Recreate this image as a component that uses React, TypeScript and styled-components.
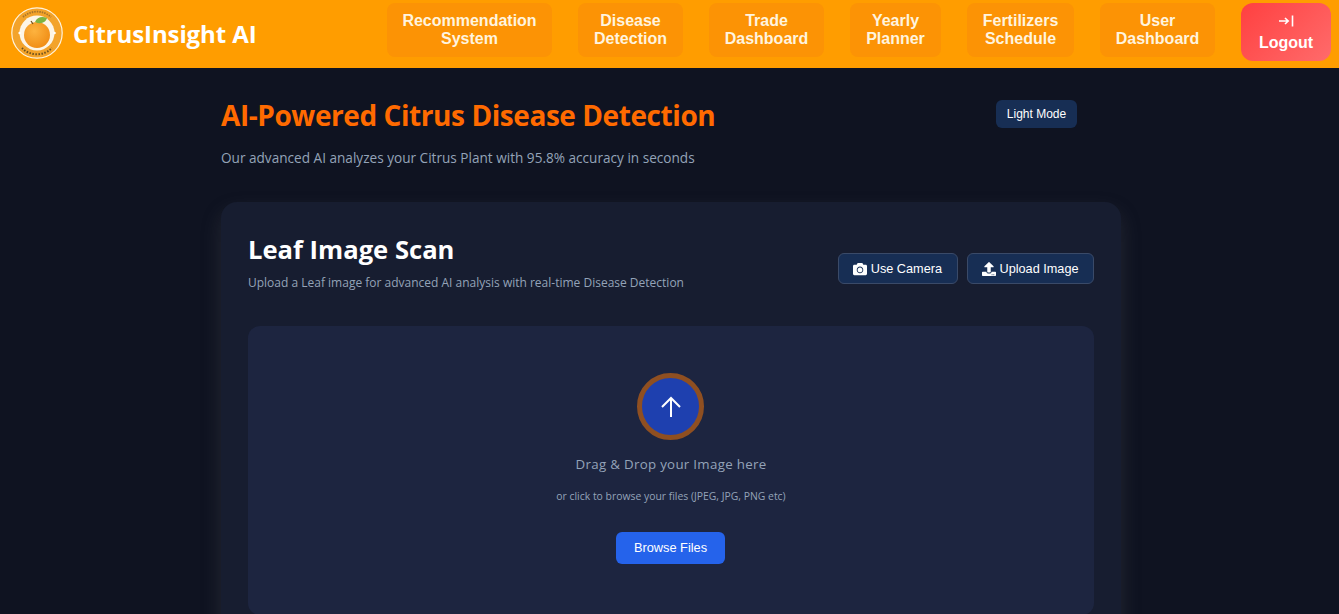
import React from 'react';
import styled, { createGlobalStyle } from 'styled-components';
import { FaCamera, FaUpload } from 'react-icons/fa';

const GlobalStyle = createGlobalStyle`
  html, body {
    margin: 0;
    padding: 0;
    height: 100%;
    overflow: hidden;
    background: #0f1321;
  }
  * {
    box-sizing: border-box;
  }
  button {
    font-family: 'Liberation Sans', Arial, sans-serif;
    cursor: pointer;
  }
`;

const Header = styled.header`
  height: 68px;
  background: #ff9d00;
  display: flex;
  align-items: flex-start;
  padding: 3px 8px 0 11px;
`;

const Brand = styled.div`
  display: flex;
  align-items: center;
  gap: 10px;
  width: 376px;
  height: 60px;
  flex: none;
`;

const BrandName = styled.span`
  font-family: 'Open Sans', 'Noto Sans', sans-serif;
  font-size: 24px;
  font-weight: 700;
  letter-spacing: -0.1px;
  line-height: 62px;
  height: 62px;
  margin-top: 1px;
  color: #fff;
  white-space: nowrap;
`;

const Nav = styled.nav`
  display: flex;
  align-items: flex-start;
  gap: 26px;
  flex: 1;
`;

const NavLink = styled.a<{ $width: number }>`
  width: ${props => props.$width}px;
  height: 54px;
  display: flex;
  align-items: center;
  justify-content: center;
  text-align: center;
  font-family: 'Liberation Sans', Arial, sans-serif;
  font-size: 16px;
  font-weight: 700;
  line-height: 18px;
  color: #fff4df;
  background: #fc9305;
  border-radius: 8px;
`;

const LogoutButton = styled.button`
  width: 90px;
  height: 58px;
  border: 0;
  border-radius: 12px;
  background: linear-gradient(135deg, #ff4040, #ff6b6b);
  color: #fff;
  font-size: 16px;
  font-weight: 700;
  display: flex;
  flex-direction: column;
  align-items: center;
  justify-content: center;
  gap: 7px;
  padding: 3px 0 0;
  line-height: 18px;
`;

const Main = styled.main`
  width: 900px;
  margin-left: 221px;
  font-family: 'Open Sans', 'Noto Sans', sans-serif;
`;

const TitleRow = styled.div`
  display: flex;
  justify-content: space-between;
  align-items: flex-start;
  padding: 29px 44px 0 0;
`;

const PageTitle = styled.h1`
  margin: 0;
  font-size: 28px;
  line-height: 38px;
  font-weight: 700;
  letter-spacing: -0.43px;
  color: #ff6a00;
  position: relative;
  top: -1px;
`;

const ThemeToggle = styled.button`
  height: 28px;
  width: 81px;
  margin-top: 3px;
  border: 0;
  border-radius: 6px;
  background: #172e54;
  color: #fff;
  font-size: 12px;
  padding: 0;
`;

const PageSubtitle = styled.p`
  margin: 14px 0 0;
  font-size: 13.6px;
  line-height: 18px;
  color: #94a3b8;
`;

const Card = styled.section`
  margin-top: 35px;
  padding: 27px;
  height: 460px;
  border-radius: 16px;
  background: #171d30;
  box-shadow: 0 10px 20px rgba(100, 100, 100, 0.25);
`;

const CardHeader = styled.div`
  display: flex;
  justify-content: space-between;
  align-items: flex-start;
`;

const CardTitle = styled.h2`
  margin: 0;
  font-size: 25.6px;
  line-height: 42px;
  font-weight: 700;
  color: #fff;
`;

const CardSubtitle = styled.p`
  margin: 3px 0 0;
  font-size: 12px;
  line-height: 17px;
  color: #94a3b8;
`;

const Actions = styled.div`
  display: flex;
  gap: 9px;
  margin-top: 24px;
`;

const ActionButton = styled.button`
  height: 31px;
  padding: 0 14.5px 0 14px;
  display: flex;
  align-items: center;
  gap: 4px;
  border: 1px solid #3a4a68;
  border-radius: 6px;
  background: #172e54;
  color: #fff;
  font-size: 12.7px;
`;

const DropZone = styled.div`
  margin-top: 35px;
  height: 289px;
  border-radius: 12px;
  background: #1d2540;
  display: flex;
  flex-direction: column;
  align-items: center;
  padding-top: 47px;
`;

const UploadCircle = styled.div`
  width: 67px;
  height: 67px;
  margin-right: 1px;
  border-radius: 50%;
  border: 5px solid #8f4f21;
  background: #1e40af;
  display: flex;
  align-items: center;
  justify-content: center;
`;

const DropTitle = styled.p`
  margin: 14px 0 0;
  font-size: 13.3px;
  line-height: 20px;
  letter-spacing: 0.3px;
  color: #94a3b8;
`;

const DropHint = styled.p`
  margin: 15px 0 0;
  font-size: 10.4px;
  line-height: 14px;
  color: #94a3b8;
`;

const BrowseButton = styled.button`
  margin-top: 29px;
  margin-right: 1px;
  width: 109px;
  height: 32px;
  border: 0;
  border-radius: 6px;
  background: #2563eb;
  color: #fff;
  font-size: 12.8px;
  padding: 0 0 2px;
`;

const Logo = () => (
  <svg width="52" height="52" viewBox="0 0 52 52">
    <defs>
      <radialGradient id="fruit" cx="40%" cy="35%" r="70%">
        <stop offset="0%" stopColor="#fdb33f" />
        <stop offset="100%" stopColor="#f08c14" />
      </radialGradient>
    </defs>
    <circle cx="26" cy="26" r="25.2" fill="#f3a32a" stroke="#fff3dc" strokeWidth="1.2" />
    <circle cx="26" cy="26" r="17.5" fill="#fdf5e6" />
    <path d="M7 26l1.6-1.5L10.2 26l-1.6 1.5z" fill="#fff" />
    <path d="M42 26l1.6-1.5L45.2 26l-1.6 1.5z" fill="#fff" />
    <circle cx="26" cy="28" r="13" fill="url(#fruit)" />
    <path d="M24 15 C26 10 31 9 36 11 C35 15 30 18 24 15 Z" fill="#7cb342" />
    <path d="M20 14l2 3" stroke="#6b4a1a" strokeWidth="1.2" />
    <path d="M12 10 A21 21 0 0 1 40 10" fill="none" stroke="#a8752a" strokeWidth="1.8" strokeDasharray="1.5 1" />
    <path d="M11 41 A21 21 0 0 0 41 41" fill="none" stroke="#6e5220" strokeWidth="2" strokeDasharray="1.5 1.5" />
  </svg>
);

const LogoutIcon = () => (
  <svg width="16" height="12" viewBox="0 0 16 12">
    <path d="M1 6H10M7 3l3.2 3L7 9" fill="none" stroke="#fff" strokeWidth="1.6" />
    <path d="M14.5 0.5V11.5" stroke="#fff" strokeWidth="1.6" />
  </svg>
);

const ArrowUp = () => (
  <svg width="24" height="24" viewBox="0 0 24 24" fill="none" stroke="#fff" strokeWidth="2">
    <path d="M12 22V4M3 12l9-9 9 9" />
  </svg>
);

const navItems = [
  { label: 'Recommendation System', width: 165 },
  { label: 'Disease Detection', width: 105 },
  { label: 'Trade Dashboard', width: 115 },
  { label: 'Yearly Planner', width: 91 },
  { label: 'Fertilizers Schedule', width: 107 },
  { label: 'User Dashboard', width: 115 }
];

const App = () => (
  <>
    <GlobalStyle />
    <Header>
      <Brand>
        <Logo />
        <BrandName>CitrusInsight AI</BrandName>
      </Brand>
      <Nav>
        {navItems.map(item => (
          <NavLink key={item.label} $width={item.width}>
            {item.label}
          </NavLink>
        ))}
        <LogoutButton>
          <LogoutIcon />
          Logout
        </LogoutButton>
      </Nav>
    </Header>
    <Main>
      <TitleRow>
        <PageTitle>AI-Powered Citrus Disease Detection</PageTitle>
        <ThemeToggle>Light Mode</ThemeToggle>
      </TitleRow>
      <PageSubtitle>Our advanced AI analyzes your Citrus Plant with 95.8% accuracy in seconds</PageSubtitle>
      <Card>
        <CardHeader>
          <div>
            <CardTitle>Leaf Image Scan</CardTitle>
            <CardSubtitle>Upload a Leaf image for advanced AI analysis with real-time Disease Detection</CardSubtitle>
          </div>
          <Actions>
            <ActionButton>
              <FaCamera size={14} />
              Use Camera
            </ActionButton>
            <ActionButton>
              <FaUpload size={14} />
              Upload Image
            </ActionButton>
          </Actions>
        </CardHeader>
        <DropZone>
          <UploadCircle>
            <ArrowUp />
          </UploadCircle>
          <DropTitle>Drag &amp; Drop your Image here</DropTitle>
          <DropHint>or click to browse your files (JPEG, JPG, PNG etc)</DropHint>
          <BrowseButton>Browse Files</BrowseButton>
        </DropZone>
      </Card>
    </Main>
  </>
);

export default App;
